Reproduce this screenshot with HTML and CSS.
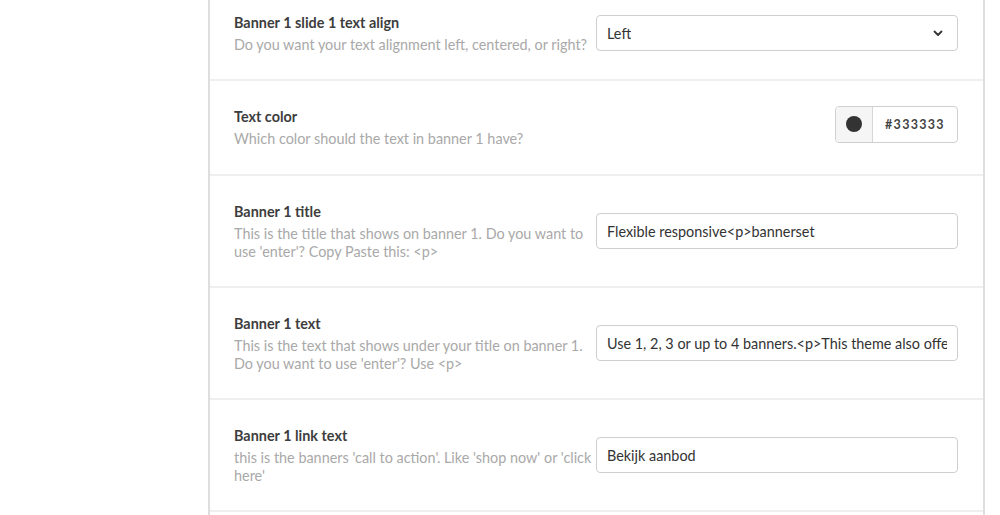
FILE: index.html
```html
<!DOCTYPE html>
<html>
<head>
<meta charset="utf-8">
<link rel="stylesheet" href="styles.css">
</head>
<body>
<div class="panel">
  <div class="row">
    <div class="info">
      <div class="label">Banner 1 slide 1 text align</div>
      <div class="desc">Do you want your text alignment left, centered, or right?</div>
    </div>
    <div class="control">
      <div class="field select">
        <span>Left</span>
        <svg class="chev" width="10" height="7" viewBox="0 0 10 7"><path d="M1.5 1.5 L5 5 L8.5 1.5" fill="none" stroke="#333" stroke-width="1.8" stroke-linecap="round" stroke-linejoin="round"/></svg>
      </div>
    </div>
  </div>
  <div class="row">
    <div class="info">
      <div class="label">Text color</div>
      <div class="desc">Which color should the text in banner 1 have?</div>
    </div>
    <div class="control end">
      <div class="color">
        <div class="swatch"><span class="dot"></span></div>
        <div class="hex">#333333</div>
      </div>
    </div>
  </div>
  <div class="row">
    <div class="info">
      <div class="label">Banner 1 title</div>
      <div class="desc">This is the title that shows on banner 1. Do you want to use 'enter'? Copy Paste this: &lt;p&gt;</div>
    </div>
    <div class="control">
      <div class="field"><span>Flexible responsive&lt;p&gt;bannerset</span></div>
    </div>
  </div>
  <div class="row">
    <div class="info">
      <div class="label">Banner 1 text</div>
      <div class="desc">This is the text that shows under your title on banner 1. Do you want to use 'enter'? Use &lt;p&gt;</div>
    </div>
    <div class="control">
      <div class="field"><span>Use 1, 2, 3 or up to 4 banners.&lt;p&gt;This theme also offers multiple layouts</span></div>
    </div>
  </div>
  <div class="row">
    <div class="info">
      <div class="label">Banner 1 link text</div>
      <div class="desc">this is the banners 'call to action'. Like 'shop now' or 'click here'</div>
    </div>
    <div class="control">
      <div class="field"><span>Bekijk aanbod</span></div>
    </div>
  </div>
  <div class="row last"></div>
</div>
</body>
</html>
```
FILE: styles.css
```css
html, body {
  margin: 0;
  padding: 0;
  background: #fff;
  overflow: hidden;
}
body {
  font-family: Lato, "Liberation Sans", sans-serif;
  font-size: 14.4px;
  color: #333;
}
.panel {
  margin-left: 208px;
  width: 773px;
  margin-top: -13px;
  border-left: 2px solid #dedede;
  border-right: 2px solid #dedede;
  height: 600px;
}
.row {
  display: grid;
  grid-template-columns: minmax(0, 1fr) minmax(0, 1fr);
  align-items: center;
  padding: 25px 25px 24px 24px;
  border-bottom: 2px solid #efefef;
}
.row.last {
  border-bottom: none;
}
.label {
  font-weight: 700;
  line-height: 22px;
  margin-bottom: 2px;
  color: #3d3d3d;
}
.desc {
  color: #a9a9a9;
  line-height: 18.5px;
}
.control {
  display: flex;
  min-width: 0;
}
.control.end {
  justify-content: flex-end;
}
.field {
  flex: 1;
  min-width: 0;
  height: 34px;
  border: 1px solid #cfcfcf;
  border-radius: 4px;
  display: flex;
  align-items: center;
  padding: 0 10px;
  overflow: hidden;
  white-space: nowrap;
  color: #333;
}
.field span {
  overflow: hidden;
}
.select {
  justify-content: space-between;
  padding-right: 14px;
}
.chev {
  display: block;
  flex: none;
}
.color {
  display: flex;
  width: 121px;
  height: 35px;
  margin-bottom: 7px;
  border: 1px solid #cfcfcf;
  border-radius: 4px;
  overflow: hidden;
}
.swatch {
  width: 36px;
  background: #f5f5f5;
  border-right: 1px solid #d6d6d6;
  display: flex;
  align-items: center;
  justify-content: center;
}
.dot {
  width: 16px;
  height: 16px;
  border-radius: 50%;
  background: #333;
}
.hex {
  flex: 1;
  display: flex;
  align-items: center;
  justify-content: center;
  font-weight: 700;
  font-size: 12.5px;
  letter-spacing: 1.3px;
  color: #444;
}
```
